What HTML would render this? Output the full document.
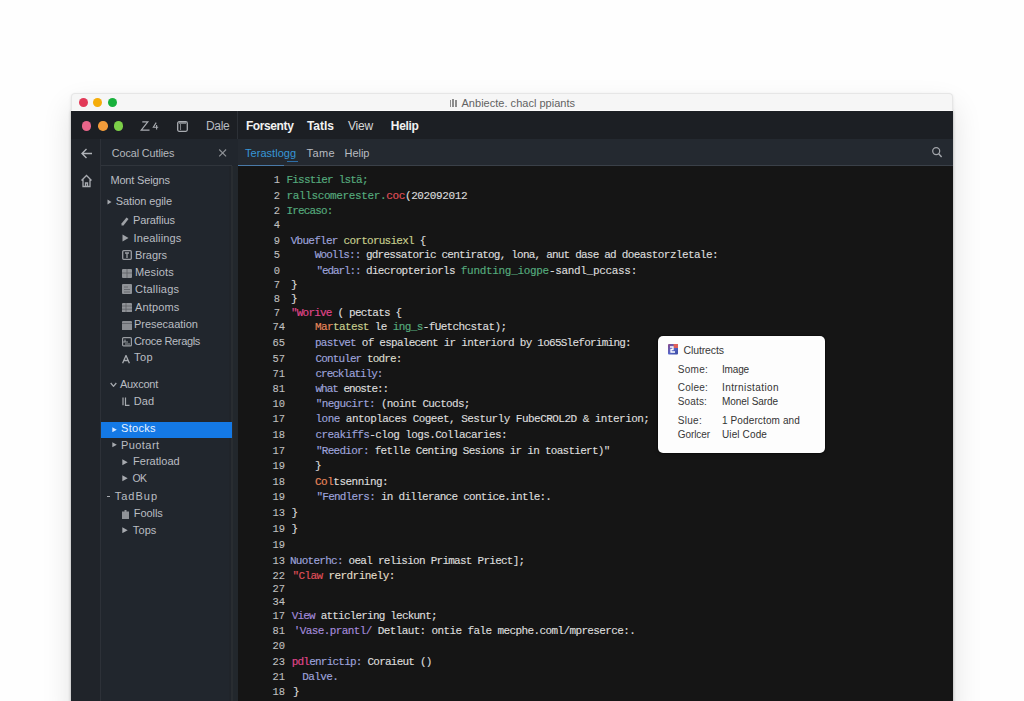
<!DOCTYPE html>
<html><head><meta charset="utf-8">
<style>
*{margin:0;padding:0;box-sizing:border-box}
html,body{width:1024px;height:701px;overflow:hidden;background:#fefefe;font-family:"Liberation Sans",sans-serif}
.a{position:absolute}
.t{position:absolute;white-space:pre;line-height:1}
.ln{font-family:"Liberation Mono",monospace;font-size:11px;color:#c0c0c0;text-align:right;width:40px;-webkit-text-stroke:0.1px currentColor;transform:scaleX(0.95);transform-origin:40px 0}
.cd{font-family:"Liberation Mono",monospace;font-size:11px;-webkit-text-stroke:0.15px currentColor}
.dot{position:absolute;border-radius:50%}
</style></head><body>
<div class="a" style="left:71px;top:93px;width:882px;height:620px;border-radius:4px 4px 0 0;box-shadow:0 14px 30px rgba(0,0,0,0.12),0 1px 3px rgba(0,0,0,0.10)"></div><div class="a" style="left:71px;top:111px;width:882px;height:600px;box-shadow:0 0 3px rgba(0,0,0,0.22)"></div>
<!-- title bar -->
<div class="a" style="left:71px;top:92.5px;width:882px;height:18.5px;background:#f6f6f6;border:1px solid #e6e6e6;border-bottom:1px solid #fbfbfb;border-radius:4px 4px 0 0"></div>
<div class="dot" style="left:79px;top:98px;width:9px;height:9px;background:#e23a58"></div>
<div class="dot" style="left:93px;top:98px;width:9px;height:9px;background:#f5ad0a"></div>
<div class="dot" style="left:108px;top:98px;width:9px;height:9px;background:#18b13c"></div>
<div class="a" style="left:449.5px;top:100px;width:1.6px;height:6.5px;background:#8d8d8d"></div>
<div class="a" style="left:452px;top:99px;width:1.6px;height:7.5px;background:#8d8d8d"></div>
<div class="a" style="left:454.5px;top:99.5px;width:2px;height:7px;background:#8d8d8d"></div>
<!-- toolbar -->
<div class="a" style="left:71px;top:111px;width:882px;height:28px;background:#1c1f24"></div>
<div class="dot" style="left:81.5px;top:121px;width:9.5px;height:9.5px;background:#e8658a"></div>
<div class="dot" style="left:98px;top:121px;width:9.5px;height:9.5px;background:#f29c3a"></div>
<div class="dot" style="left:113.5px;top:121px;width:9.5px;height:9.5px;background:#7ccf48"></div>
<svg class="a" style="left:139.5px;top:120px" width="20" height="11" viewBox="0 0 20 11"><path d="M2.3 1.8H7.8L1.2 10.1H9.5" stroke="#a9acb1" stroke-width="1.2" fill="none"/><path d="M16.2 2.6L13.3 7.2H18.2M16.6 5V9.6" stroke="#a9acb1" stroke-width="1.1" fill="none"/></svg>
<svg class="a" style="left:177px;top:120.5px" width="11" height="11" viewBox="0 0 11 11"><rect x="0.7" y="0.7" width="9.6" height="9.6" rx="1.5" stroke="#a9acb1" stroke-width="1.3" fill="none"/><path d="M2 2H9" stroke="#a9acb1" stroke-width="1.3"/><path d="M3.5 3V9" stroke="#7d8085" stroke-width="1"/></svg>
<div class="a" style="left:237px;top:111px;width:1px;height:55px;background:#2c3036"></div>
<!-- activity bar -->
<div class="a" style="left:71px;top:139px;width:29px;height:562px;background:#20242a"></div>
<div class="a" style="left:100px;top:139px;width:1px;height:562px;background:#2d3138"></div>
<svg class="a" style="left:80px;top:147px" width="13" height="13" viewBox="0 0 13 13"><path d="M12 6.5H2M6.5 2L2 6.5L6.5 11" stroke="#b0b3b8" stroke-width="1.4" fill="none"/></svg>
<svg class="a" style="left:80px;top:174px" width="13" height="14" viewBox="0 0 13 14"><path d="M1.5 6.5L6.5 1.5L11.5 6.5M3 5.5V12.5H10V5.5M5.5 12.5V9H7.5V12.5" stroke="#a8abb0" stroke-width="1.3" fill="none"/></svg>
<!-- sidebar -->
<div class="a" style="left:101px;top:139px;width:137px;height:562px;background:#21262d"></div>
<div class="a" style="left:101px;top:165px;width:131px;height:1px;background:#30353c"></div>
<div class="a" style="left:229px;top:166px;width:2px;height:535px;background:#20242a"></div><div class="a" style="left:231px;top:166px;width:2px;height:535px;background:#292d31"></div><div class="a" style="left:233px;top:166px;width:5px;height:535px;background:#22272c"></div>
<svg class="a" style="left:217px;top:147px" width="11" height="11" viewBox="0 0 11 11"><path d="M2.2 2.5L9.1 9.3M9.1 2.5L2.2 9.3" stroke="#8d9095" stroke-width="1.15"/></svg>
<!-- selection -->
<div class="a" style="left:101px;top:421.5px;width:131px;height:16px;background:#1479e6"></div>
<!-- tabs -->
<div class="a" style="left:238px;top:139px;width:715px;height:26px;background:#242930"></div>
<div class="a" style="left:238px;top:165px;width:715px;height:1px;background:#3a4048"></div>
<div class="a" style="left:238px;top:164.5px;width:46px;height:1.5px;background:#4a7aa8"></div><div class="a" style="left:287px;top:160.5px;width:11px;height:1px;background:#2e6fa8"></div>
<svg class="a" style="left:930px;top:145px" width="14" height="14" viewBox="0 0 14 14"><circle cx="6.2" cy="6.1" r="3.5" stroke="#a3a6ab" stroke-width="1.25" fill="none"/><path d="M8.7 8.7L11.6 12" stroke="#a3a6ab" stroke-width="1.4"/></svg>
<!-- code -->
<div class="a" style="left:238px;top:166px;width:715px;height:535px;background:#151515"></div>
<!-- popup -->
<div class="a" style="left:658px;top:336px;width:167px;height:117px;background:#fdfdfd;border-radius:5px;box-shadow:0 0 0 1px rgba(0,0,0,0.25),0 1px 4px rgba(0,0,0,0.3)"></div>
<svg class="a" style="left:667.5px;top:344px" width="10" height="10.5" viewBox="0 0 10 10.5"><defs><linearGradient id="pg" x1="0" y1="0" x2="1" y2="1"><stop offset="0" stop-color="#8a4a8a"/><stop offset="0.5" stop-color="#5565c8"/><stop offset="1" stop-color="#3a4aa0"/></linearGradient></defs><rect width="10" height="10.5" rx="1" fill="url(#pg)"/><rect x="5.5" y="0" width="4.5" height="4" fill="#e0605a"/><path d="M2 3H5V5.5H3V8H7" stroke="#ffffff" stroke-width="1.3" fill="none"/></svg>
<!-- sidebar icons -->
<svg class="a" style="left:107px;top:198.5px" width="5" height="6" viewBox="0 0 5 6"><path d="M0.5 0.5L4.5 3L0.5 5.5Z" fill="#a7aaaf"/></svg>
<svg class="a" style="left:121px;top:216.5px" width="8" height="9" viewBox="0 0 8 9"><path d="M5.5 0.5L7.5 2L2.5 8.5L0.5 8.5L0.5 6.5Z" fill="#9fa2a7"/></svg>
<svg class="a" style="left:121.5px;top:234px" width="7" height="8" viewBox="0 0 7 8"><path d="M0.5 0.5L6.5 4L0.5 7.5Z" fill="#9fa2a7"/></svg>
<svg class="a" style="left:121.5px;top:249.5px" width="10" height="10" viewBox="0 0 10 10"><rect x="0.7" y="0.7" width="8.6" height="8.6" rx="1" stroke="#9a9da2" stroke-width="1.3" fill="none"/><path d="M3 3H7M5 3V8" stroke="#9a9da2" stroke-width="1.3"/></svg>
<svg class="a" style="left:121.5px;top:268.5px" width="10" height="9" viewBox="0 0 10 9"><rect x="0" y="0" width="10" height="9" rx="1" fill="#8f9297"/><path d="M0 4H10M5 0V9" stroke="#5d6066" stroke-width="0.8"/></svg>
<svg class="a" style="left:121.5px;top:284px" width="10" height="10" viewBox="0 0 10 10"><rect x="0" y="0" width="10" height="10" rx="1" fill="#8f9297"/><path d="M2 3H6M2 5.5H8M2 8H8" stroke="#5d6066" stroke-width="0.8"/></svg>
<svg class="a" style="left:121.5px;top:302.5px" width="10" height="9.5" viewBox="0 0 10 9.5"><rect x="0" y="0" width="10" height="9.5" rx="1" fill="#8f9297"/><path d="M0 3H10M0 6.2H10M4 0V9.5" stroke="#5d6066" stroke-width="0.8"/></svg>
<svg class="a" style="left:121.5px;top:320.5px" width="10" height="9.5" viewBox="0 0 10 9.5"><rect x="0" y="0" width="10" height="9.5" rx="1" fill="#8a8d92"/><path d="M0 2.5H10" stroke="#5d6066" stroke-width="0.8"/></svg>
<svg class="a" style="left:121.5px;top:337px" width="10" height="9.5" viewBox="0 0 10 9.5"><rect x="0.6" y="0.6" width="8.8" height="8.3" rx="1" stroke="#9a9da2" stroke-width="1.2" fill="none"/><path d="M3 2.5V5M1 5H6M3 7H8" stroke="#9a9da2" stroke-width="1.1"/></svg>
<svg class="a" style="left:121.5px;top:355px" width="8" height="8.5" viewBox="0 0 8 8.5"><path d="M0.6 8.3L4 0.5L7.4 8.3M2 5.5H6" stroke="#a7aaaf" stroke-width="1.3" fill="none"/></svg>
<svg class="a" style="left:110px;top:381.5px" width="7" height="5.5" viewBox="0 0 7 5.5"><path d="M0.7 1L3.5 4.3L6.3 1" stroke="#a7aaaf" stroke-width="1.3" fill="none"/></svg>
<svg class="a" style="left:121.5px;top:397px" width="8" height="9" viewBox="0 0 8 9"><path d="M1 0.5V8.3M3.5 0.5V8.3H7.5" stroke="#a7aaaf" stroke-width="1.2" fill="none"/></svg>
<svg class="a" style="left:111.5px;top:426.5px" width="5" height="5.5" viewBox="0 0 5 5.5"><path d="M0.3 0.3L4.8 2.75L0.3 5.2Z" fill="#d8e8ff"/></svg>
<svg class="a" style="left:111.5px;top:442px" width="5" height="5.5" viewBox="0 0 5 5.5"><path d="M0.3 0.3L4.8 2.75L0.3 5.2Z" fill="#a7aaaf"/></svg>
<svg class="a" style="left:122px;top:459px" width="6" height="6.5" viewBox="0 0 6 6.5"><path d="M0.3 0.3L5.7 3.25L0.3 6.2Z" fill="#a7aaaf"/></svg>
<svg class="a" style="left:122px;top:475px" width="6" height="6.5" viewBox="0 0 6 6.5"><path d="M0.3 0.3L5.7 3.25L0.3 6.2Z" fill="#a7aaaf"/></svg>
<div class="a" style="left:107px;top:495.5px;width:3px;height:1.5px;background:#a7aaaf"></div>
<svg class="a" style="left:121.5px;top:510px" width="7.5" height="9" viewBox="0 0 7.5 9"><path d="M0 1.5H2.5V0H4.5V1.5H7.5V9H0Z" fill="#8f9297"/></svg>
<svg class="a" style="left:122px;top:526.5px" width="6" height="6.5" viewBox="0 0 6 6.5"><path d="M0.3 0.3L5.7 3.25L0.3 6.2Z" fill="#a7aaaf"/></svg>
<div class="t" style="left:461.5px;top:97.8px;font-size:11px;font-weight:400;color:#626262;letter-spacing:0.02px">Anbiecte. chacl ppiants</div>
<div class="t" style="left:206.0px;top:120.4px;font-size:12px;font-weight:400;color:#b8bbc0;letter-spacing:-0.30px">Dale</div>
<div class="t" style="left:245.9px;top:120.4px;font-size:12px;font-weight:700;color:#f2f2f2;letter-spacing:-0.39px">Forsenty</div>
<div class="t" style="left:306.9px;top:120.4px;font-size:12px;font-weight:700;color:#f2f2f2;letter-spacing:-0.04px">Tatls</div>
<div class="t" style="left:348.0px;top:120.4px;font-size:12px;font-weight:400;color:#d8d8d8;letter-spacing:-0.20px">View</div>
<div class="t" style="left:390.8px;top:120.4px;font-size:12px;font-weight:700;color:#f2f2f2;letter-spacing:-0.31px">Helip</div>
<div class="t" style="left:245.0px;top:147.9px;font-size:11px;font-weight:400;color:#3796d6;letter-spacing:0.04px">Terastlogg</div>
<div class="t" style="left:306.5px;top:147.9px;font-size:11px;font-weight:400;color:#b9bcc1;letter-spacing:0.40px">Tame</div>
<div class="t" style="left:344.5px;top:147.9px;font-size:11px;font-weight:400;color:#b9bcc1;letter-spacing:-0.02px">Helip</div>
<div class="t" style="left:111.8px;top:147.5px;font-size:10.8px;font-weight:400;color:#b6b9be;letter-spacing:-0.09px">Cocal Cutlies</div>
<div class="t" style="left:110.4px;top:174.8px;font-size:11px;font-weight:400;color:#babdc2;letter-spacing:-0.16px">Mont Seigns</div>
<div class="t" style="left:115.7px;top:195.6px;font-size:11px;font-weight:400;color:#babdc2;letter-spacing:-0.10px">Sation egile</div>
<div class="t" style="left:132.9px;top:214.6px;font-size:11px;font-weight:400;color:#babdc2;letter-spacing:-0.08px">Paraflius</div>
<div class="t" style="left:133.6px;top:232.5px;font-size:11px;font-weight:400;color:#babdc2;letter-spacing:0.13px">Inealiings</div>
<div class="t" style="left:135.0px;top:249.6px;font-size:11px;font-weight:400;color:#babdc2;letter-spacing:-0.07px">Bragrs</div>
<div class="t" style="left:135.0px;top:266.6px;font-size:11px;font-weight:400;color:#babdc2;letter-spacing:0.14px">Mesiots</div>
<div class="t" style="left:135.0px;top:283.9px;font-size:11px;font-weight:400;color:#babdc2;letter-spacing:0.23px">Ctalliags</div>
<div class="t" style="left:135.0px;top:301.8px;font-size:11px;font-weight:400;color:#babdc2;letter-spacing:0.13px">Antpoms</div>
<div class="t" style="left:134.0px;top:319.3px;font-size:11px;font-weight:400;color:#babdc2;letter-spacing:-0.03px">Presecaation</div>
<div class="t" style="left:134.0px;top:335.9px;font-size:11px;font-weight:400;color:#babdc2;letter-spacing:-0.33px">Croce Reragls</div>
<div class="t" style="left:134.0px;top:352.4px;font-size:11px;font-weight:400;color:#babdc2;letter-spacing:0.38px">Top</div>
<div class="t" style="left:119.9px;top:378.6px;font-size:11px;font-weight:400;color:#babdc2;letter-spacing:-0.24px">Auxcont</div>
<div class="t" style="left:133.8px;top:395.8px;font-size:11px;font-weight:400;color:#babdc2;letter-spacing:0.10px">Dad</div>
<div class="t" style="left:121.0px;top:423.2px;font-size:11px;font-weight:400;color:#e8f2ff;letter-spacing:0.30px">Stocks</div>
<div class="t" style="left:121.0px;top:439.8px;font-size:11px;font-weight:400;color:#babdc2;letter-spacing:0.43px">Puotart</div>
<div class="t" style="left:133.0px;top:455.9px;font-size:11px;font-weight:400;color:#babdc2;letter-spacing:0.02px">Feratload</div>
<div class="t" style="left:132.4px;top:472.5px;font-size:10.5px;font-weight:400;color:#babdc2;letter-spacing:-0.64px">OK</div>
<div class="t" style="left:114.8px;top:491.3px;font-size:11px;font-weight:400;color:#babdc2;letter-spacing:0.98px">TadBup</div>
<div class="t" style="left:133.8px;top:508.2px;font-size:11px;font-weight:400;color:#babdc2;letter-spacing:-0.07px">Foolls</div>
<div class="t" style="left:132.8px;top:525.0px;font-size:11px;font-weight:400;color:#babdc2;letter-spacing:0.11px">Tops</div>
<div class="t" style="left:683.4px;top:344.7px;font-size:10.5px;font-weight:400;color:#383838;letter-spacing:-0.09px">Clutrects</div>
<div class="t" style="left:677.8px;top:365.4px;font-size:10px;font-weight:400;color:#393939;letter-spacing:0.26px">Some:</div>
<div class="t" style="left:677.8px;top:383.0px;font-size:10px;font-weight:400;color:#393939;letter-spacing:0.22px">Colee:</div>
<div class="t" style="left:677.8px;top:396.9px;font-size:10px;font-weight:400;color:#393939;letter-spacing:0.14px">Soats:</div>
<div class="t" style="left:677.8px;top:416.3px;font-size:10px;font-weight:400;color:#393939;letter-spacing:0.28px">Slue:</div>
<div class="t" style="left:677.8px;top:429.7px;font-size:10px;font-weight:400;color:#393939;letter-spacing:-0.09px">Gorlcer</div>
<div class="t" style="left:722.0px;top:365.4px;font-size:10px;font-weight:400;color:#333;letter-spacing:-0.16px">Image</div>
<div class="t" style="left:722.0px;top:383.0px;font-size:10px;font-weight:400;color:#333;letter-spacing:0.41px">Intrnistation</div>
<div class="t" style="left:722.0px;top:396.9px;font-size:10px;font-weight:400;color:#333;letter-spacing:-0.06px">Monel Sarde</div>
<div class="t" style="left:722.0px;top:416.3px;font-size:10px;font-weight:400;color:#333;letter-spacing:0.12px">1 Poderctom and</div>
<div class="t" style="left:722.0px;top:429.7px;font-size:10px;font-weight:400;color:#333;letter-spacing:0.12px">Uiel Code</div>
<div class="t ln" style="top:174.7px;left:240.3px">1</div>
<div class="t cd" style="top:174.7px;left:286.5px;letter-spacing:-0.80px"><span style="color:#55ab7d">Fisstier lstä;</span></div>
<div class="t ln" style="top:190.8px;left:240.3px">2</div>
<div class="t cd" style="top:190.8px;left:286.5px;letter-spacing:-0.37px"><span style="color:#55ab7d">rallscomerester.</span><span style="color:#e0505a">coc</span><span style="color:#dcdcdc">(202092012</span></div>
<div class="t ln" style="top:206.3px;left:240.3px">2</div>
<div class="t cd" style="top:206.3px;left:286.5px;letter-spacing:-0.85px"><span style="color:#55ab7d">Irecaso:</span></div>
<div class="t ln" style="top:220.4px;left:240.3px">4</div>
<div class="t ln" style="top:236.0px;left:240.3px">9</div>
<div class="t cd" style="top:236.0px;left:290.7px;letter-spacing:-0.73px"><span style="color:#9ea3dc">Vbuefler</span><span style="color:#c8cf8e"> cortorusiexl</span><span style="color:#dcdcdc"> {</span></div>
<div class="t ln" style="top:250.3px;left:240.3px">5</div>
<div class="t cd" style="top:250.3px;left:314.8px;letter-spacing:-0.91px"><span style="color:#9ea3dc">Woolls::</span><span style="color:#dcdcdc"> </span></div>
<div class="t cd" style="top:250.3px;left:366.0px;letter-spacing:-0.79px"><span style="color:#dcdcdc">gdressatoric centiratog, lona, anut dase ad </span></div>
<div class="t cd" style="top:250.3px;left:621.8px;letter-spacing:-0.59px"><span style="color:#dcdcdc">doeastorzletale:</span></div>
<div class="t ln" style="top:265.7px;left:240.3px">0</div>
<div class="t cd" style="top:265.7px;left:316.5px;letter-spacing:-1.10px"><span style="color:#9ea3dc">&quot;edarl::</span><span style="color:#dcdcdc"> </span></div>
<div class="t cd" style="top:265.7px;left:366.0px;letter-spacing:-0.67px"><span style="color:#dcdcdc">diecropteriorls </span></div>
<div class="t cd" style="top:265.7px;left:460.8px;letter-spacing:-0.31px"><span style="color:#55ab7d">fundting_iogpe</span><span style="color:#dcdcdc">-sandl_pccass:</span></div>
<div class="t ln" style="top:279.7px;left:240.3px">7</div>
<div class="t cd" style="top:279.7px;left:291.0px;letter-spacing:0.00px"><span style="color:#dcdcdc">}</span></div>
<div class="t ln" style="top:293.6px;left:240.3px">8</div>
<div class="t cd" style="top:293.6px;left:291.0px;letter-spacing:0.00px"><span style="color:#dcdcdc">}</span></div>
<div class="t ln" style="top:308.2px;left:240.3px">7</div>
<div class="t cd" style="top:308.2px;left:291.0px;letter-spacing:-0.79px"><span style="color:#e0468c">&quot;Worive</span><span style="color:#dcdcdc"> ( pectats {</span></div>
<div class="t ln" style="top:322.4px;left:245.3px">74</div>
<div class="t cd" style="top:322.4px;left:315.0px;letter-spacing:-0.62px"><span style="color:#e9885c">Mar</span><span style="color:#c8cf8e">tatest</span><span style="color:#dcdcdc"> le </span><span style="color:#55ab7d">ing_s</span><span style="color:#dcdcdc">-fUetchcstat);</span></div>
<div class="t ln" style="top:337.9px;left:245.3px">65</div>
<div class="t cd" style="top:337.9px;left:315.0px;letter-spacing:-0.75px"><span style="color:#9ea3dc">pastvet</span><span style="color:#dcdcdc"> of espalecent ir interiord by 1o65Sleforiming:</span></div>
<div class="t ln" style="top:353.8px;left:245.3px">57</div>
<div class="t cd" style="top:353.8px;left:315.5px;letter-spacing:-0.87px"><span style="color:#9ea3dc">Contuler</span><span style="color:#dcdccc"> todre:</span></div>
<div class="t ln" style="top:369.0px;left:245.3px">71</div>
<div class="t cd" style="top:369.0px;left:315.5px;letter-spacing:-1.03px"><span style="color:#9ea3dc">crecklatily:</span></div>
<div class="t ln" style="top:383.8px;left:245.3px">81</div>
<div class="t cd" style="top:383.8px;left:315.5px;letter-spacing:-1.01px"><span style="color:#9ea3dc">what</span><span style="color:#dcdcdc"> enoste::</span></div>
<div class="t ln" style="top:398.7px;left:245.3px">10</div>
<div class="t cd" style="top:398.7px;left:315.8px;letter-spacing:-0.68px"><span style="color:#9ea3dc">&quot;negucirt:</span><span style="color:#dcdcdc"> (noint Cuctods;</span></div>
<div class="t ln" style="top:414.2px;left:245.3px">17</div>
<div class="t cd" style="top:414.2px;left:315.5px;letter-spacing:-0.53px"><span style="color:#9ea3dc">lone</span><span style="color:#dcdcdc"> antoplaces Cogeet, Sesturly FubeCROL2D &amp; interion;</span></div>
<div class="t ln" style="top:429.6px;left:245.3px">18</div>
<div class="t cd" style="top:429.6px;left:315.5px;letter-spacing:-0.62px"><span style="color:#9ea3dc">creakiffs</span><span style="color:#dcdcdc">-clog logs.Collacaries:</span></div>
<div class="t ln" style="top:446.2px;left:245.3px">17</div>
<div class="t cd" style="top:446.2px;left:316.0px;letter-spacing:-0.73px"><span style="color:#9ea3dc">&quot;Reedior:</span><span style="color:#dcdcdc"> fetlle Centing Sesions ir in toastiert)&quot;</span></div>
<div class="t ln" style="top:461.2px;left:245.3px">19</div>
<div class="t cd" style="top:461.2px;left:315.0px;letter-spacing:0.00px"><span style="color:#dcdcdc">}</span></div>
<div class="t ln" style="top:477.2px;left:245.3px">18</div>
<div class="t cd" style="top:477.2px;left:315.0px;letter-spacing:-0.50px"><span style="color:#e9885c">Col</span><span style="color:#dcdcdc">tsenning:</span></div>
<div class="t ln" style="top:492.1px;left:245.3px">19</div>
<div class="t cd" style="top:492.1px;left:316.4px;letter-spacing:-0.73px"><span style="color:#9ea3dc">&quot;Fendlers:</span><span style="color:#dcdcdc"> in dillerance contice.intle:.</span></div>
<div class="t ln" style="top:508.0px;left:245.3px">13</div>
<div class="t cd" style="top:508.0px;left:291.5px;letter-spacing:0.00px"><span style="color:#dcdcdc">}</span></div>
<div class="t ln" style="top:524.0px;left:245.3px">19</div>
<div class="t cd" style="top:524.0px;left:291.5px;letter-spacing:0.00px"><span style="color:#dcdcdc">}</span></div>
<div class="t ln" style="top:540.2px;left:245.3px">19</div>
<div class="t ln" style="top:556.2px;left:245.3px">13</div>
<div class="t cd" style="top:556.2px;left:290.0px;letter-spacing:-0.74px"><span style="color:#9ea3dc">Nuoterhc:</span><span style="color:#dcdcdc"> oeal relision Primast Priect];</span></div>
<div class="t ln" style="top:571.0px;left:245.3px">22</div>
<div class="t cd" style="top:571.0px;left:292.4px;letter-spacing:-0.58px"><span style="color:#e0505a">&quot;Claw</span><span style="color:#e2ddc8"> rerdrinely:</span></div>
<div class="t ln" style="top:584.2px;left:245.3px">27</div>
<div class="t ln" style="top:597.3px;left:245.3px">34</div>
<div class="t ln" style="top:611.4px;left:245.3px">17</div>
<div class="t cd" style="top:611.4px;left:291.7px;letter-spacing:-0.80px"><span style="color:#a48bdc">View</span><span style="color:#dcdcdc"> atticlering leckunt;</span></div>
<div class="t ln" style="top:626.4px;left:245.3px">81</div>
<div class="t cd" style="top:626.4px;left:293.8px;letter-spacing:-0.61px"><span style="color:#a48bdc">&#x27;Vase.prantl/</span><span style="color:#dcdcdc"> Detlaut: ontie fale mecphe.coml/mpreserce:.</span></div>
<div class="t ln" style="top:640.8px;left:245.3px">20</div>
<div class="t ln" style="top:656.6px;left:245.3px">23</div>
<div class="t cd" style="top:656.6px;left:291.7px;letter-spacing:-0.77px"><span style="color:#e0468c">pdl</span><span style="color:#9ea3dc">enrictip:</span><span style="color:#dcdcdc"> Coraieut ()</span></div>
<div class="t ln" style="top:671.6px;left:245.3px">21</div>
<div class="t cd" style="top:671.6px;left:302.2px;letter-spacing:-0.57px"><span style="color:#9ea3dc">Dalve.</span></div>
<div class="t ln" style="top:687.4px;left:245.3px">18</div>
<div class="t cd" style="top:687.4px;left:292.9px;letter-spacing:0.00px"><span style="color:#dcdcdc">}</span></div>
</body></html>
